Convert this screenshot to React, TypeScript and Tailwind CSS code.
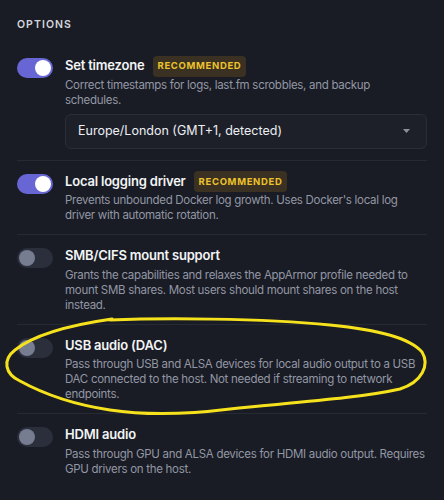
import React from "react";

type Option = {
  id: string;
  title: string;
  description: string;
  enabled: boolean;
  recommended?: boolean;
  select?: string;
};

const options: Option[] = [
  {
    id: "tz",
    title: "Set timezone",
    description:
      "Correct timestamps for logs, last.fm scrobbles, and backup schedules.",
    enabled: true,
    recommended: true,
    select: "Europe/London (GMT+1, detected)",
  },
  {
    id: "logging",
    title: "Local logging driver",
    description:
      "Prevents unbounded Docker log growth. Uses Docker's local log driver with automatic rotation.",
    enabled: true,
    recommended: true,
  },
  {
    id: "smb",
    title: "SMB/CIFS mount support",
    description:
      "Grants the capabilities and relaxes the AppArmor profile needed to mount SMB shares. Most users should mount shares on the host instead.",
    enabled: false,
  },
  {
    id: "usb",
    title: "USB audio (DAC)",
    description:
      "Pass through USB and ALSA devices for local audio output to a USB DAC connected to the host. Not needed if streaming to network endpoints.",
    enabled: false,
  },
  {
    id: "hdmi",
    title: "HDMI audio",
    description:
      "Pass through GPU and ALSA devices for HDMI audio output. Requires GPU drivers on the host.",
    enabled: false,
  },
];

const Toggle: React.FC<{ on: boolean }> = ({ on }) => (
  <div
    className={`relative mt-[2px] h-5 w-9 shrink-0 rounded-full ${
      on ? "bg-[#6866d4]" : "bg-[#2b2f3c]"
    }`}
  >
    <div
      className={`absolute top-0.5 h-4 w-4 rounded-full ${
        on ? "left-[18px] bg-white" : "left-0.5 bg-[#767d91]"
      }`}
    />
  </div>
);

const OptionRow: React.FC<{ option: Option }> = ({ option }) => (
  <div className="flex gap-3 border-b border-[#262a33] pt-[11px] pb-[11px] last:border-b-0">
    <Toggle on={option.enabled} />
    <div className="min-w-0 flex-1">
      <div className="flex h-5 items-center gap-2">
        <span className="text-[13px] font-semibold tracking-[-0.015em] text-[#f3f4f6]">
          {option.title}
        </span>
        {option.recommended && (
          <span className="rounded-[4px] bg-[#3a3122] px-[5px] py-[3.5px] text-[9.5px] leading-[14px] font-bold tracking-[0.07em] text-[#eec22c]">
            RECOMMENDED
          </span>
        )}
      </div>
      <p className="mt-[1.5px] text-[11.5px] leading-[15px] tracking-[-0.025em] text-[#9397a4]">
        {option.description}
      </p>
      {option.select && (
        <div className="mt-[6px] flex h-[35px] items-center justify-between rounded-md border border-[#2a2e38] bg-[#1d2029] pr-4 pl-3">
          <span className="text-[12.5px] text-[#eceef2]">{option.select}</span>
          <svg width="7" height="4" viewBox="0 0 7 4">
            <path d="M0 0h7L3.5 4z" fill="#8b909c" />
          </svg>
        </div>
      )}
    </div>
  </div>
);

export default function App() {
  return (
    <div className="relative min-h-screen bg-[#191c24] px-[17px] pt-[18px] font-['Inter',sans-serif]">
      <h2 className="text-[10.5px] leading-[14px] font-semibold tracking-[0.1em] text-[#d4d6dc]">
        OPTIONS
      </h2>
      <div className="mt-[13px]">
        {options.map((o) => (
          <OptionRow key={o.id} option={o} />
        ))}
      </div>

      {/* marker circle drawn around the USB audio row */}
      <svg
        className="pointer-events-none absolute top-0 left-0"
        width="444"
        height="500"
        viewBox="0 0 444 500"
      >
        <path
          d="M110 320 C160 318 260 318 330 325 C380 330 410 338 422 352 C430 365 422 382 400 389 C360 398 300 402 230 409 C190 414 150 416 110 410 C70 404 40 392 20 381 C5 374 2 360 15 350 C35 334 70 325 112 319"
          fill="none"
          stroke="#f6e21c"
          strokeWidth="3"
          strokeLinecap="round"
          strokeLinejoin="round"
        />
      </svg>
    </div>
  );
}
